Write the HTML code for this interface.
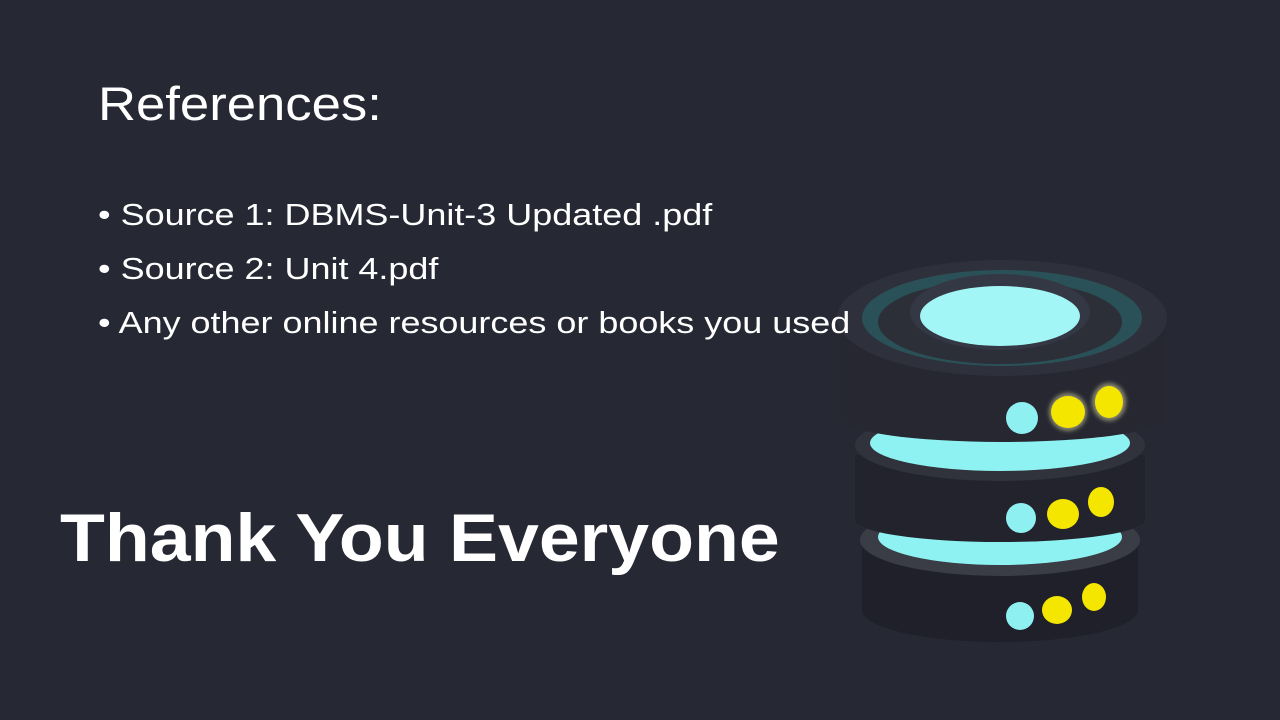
<!DOCTYPE html>
<html><head><meta charset="utf-8"><style>
body{margin:0;width:1280px;height:720px;background:#262833;overflow:hidden;position:relative;font-family:"Liberation Sans",sans-serif;color:#fff}
.t{position:absolute;white-space:nowrap;transform-origin:0 50%;z-index:2}
</style></head><body>
<svg width="1280" height="720" style="position:absolute;left:0;top:0;z-index:1">
<defs><filter id="g"><feGaussianBlur stdDeviation="2"/></filter></defs>
<rect x="862" y="545" width="276" height="65" fill="#1f2029"/>
<ellipse cx="1000" cy="610" rx="138" ry="32" fill="#1f2029"/>
<ellipse cx="1000" cy="540" rx="140" ry="36" fill="#3a3c46"/>
<ellipse cx="1000" cy="537" rx="122" ry="28" fill="#8ff2f2"/>
<rect x="855" y="455" width="290" height="65" fill="#22232d"/>
<ellipse cx="1000" cy="520" rx="145" ry="22" fill="#22232d"/>
<ellipse cx="1000" cy="445" rx="145" ry="36" fill="#30323c"/>
<ellipse cx="1000" cy="443" rx="130" ry="28" fill="#8ff2f2"/>
<rect x="840" y="318" width="325" height="100" fill="#262731"/>
<ellipse cx="1002" cy="418" rx="162" ry="24" fill="#262731"/>
<ellipse cx="1002" cy="318" rx="165" ry="58" fill="#2e303b"/>
<ellipse cx="1002" cy="318" rx="140" ry="48" fill="#2a5158"/>
<ellipse cx="1000" cy="322" rx="122" ry="42" fill="#2c2e38"/>
<ellipse cx="1000" cy="312" rx="90" ry="38" fill="#343845"/>
<ellipse cx="1000" cy="316" rx="80" ry="30" fill="#a2f6f6"/>
<g filter="url(#g)" opacity=".6">
<ellipse cx="1068" cy="412" rx="19" ry="19" fill="#cc9"/><ellipse cx="1109" cy="402" rx="17" ry="19" fill="#cc9"/>
</g>
<circle cx="1022" cy="418" r="16" fill="#8ef0f0"/>
<ellipse cx="1068" cy="412" rx="17" ry="16" fill="#f5e600"/>
<ellipse cx="1109" cy="402" rx="14" ry="16" fill="#f5e600"/>
<circle cx="1021" cy="518" r="15" fill="#8ef0f0"/>
<ellipse cx="1063" cy="514" rx="16" ry="15" fill="#f5e600"/>
<ellipse cx="1101" cy="502" rx="13" ry="15" fill="#f5e600"/>
<circle cx="1020" cy="616" r="14" fill="#8ef0f0"/>
<ellipse cx="1057" cy="610" rx="15" ry="14" fill="#f5e600"/>
<ellipse cx="1094" cy="597" rx="12" ry="14" fill="#f5e600"/>
</svg>
<div class="t" style="left:98px;top:76px;font-size:47px;transform:scaleX(1.12)">References:</div>
<div class="t" style="left:98px;top:197px;font-size:31px;line-height:36px;transform:scaleX(1.16)">• Source 1: DBMS-Unit-3 Updated .pdf</div>
<div class="t" style="left:98px;top:251px;font-size:31px;line-height:36px;transform:scaleX(1.16)">• Source 2: Unit 4.pdf</div>
<div class="t" style="left:98px;top:305px;font-size:31px;line-height:36px;transform:scaleX(1.16)">• Any other online resources or books you used</div>
<div class="t" style="left:60px;top:498px;font-size:68px;font-weight:bold;line-height:80px;transform:scaleX(1.08)">Thank You Everyone</div>
</body></html>
